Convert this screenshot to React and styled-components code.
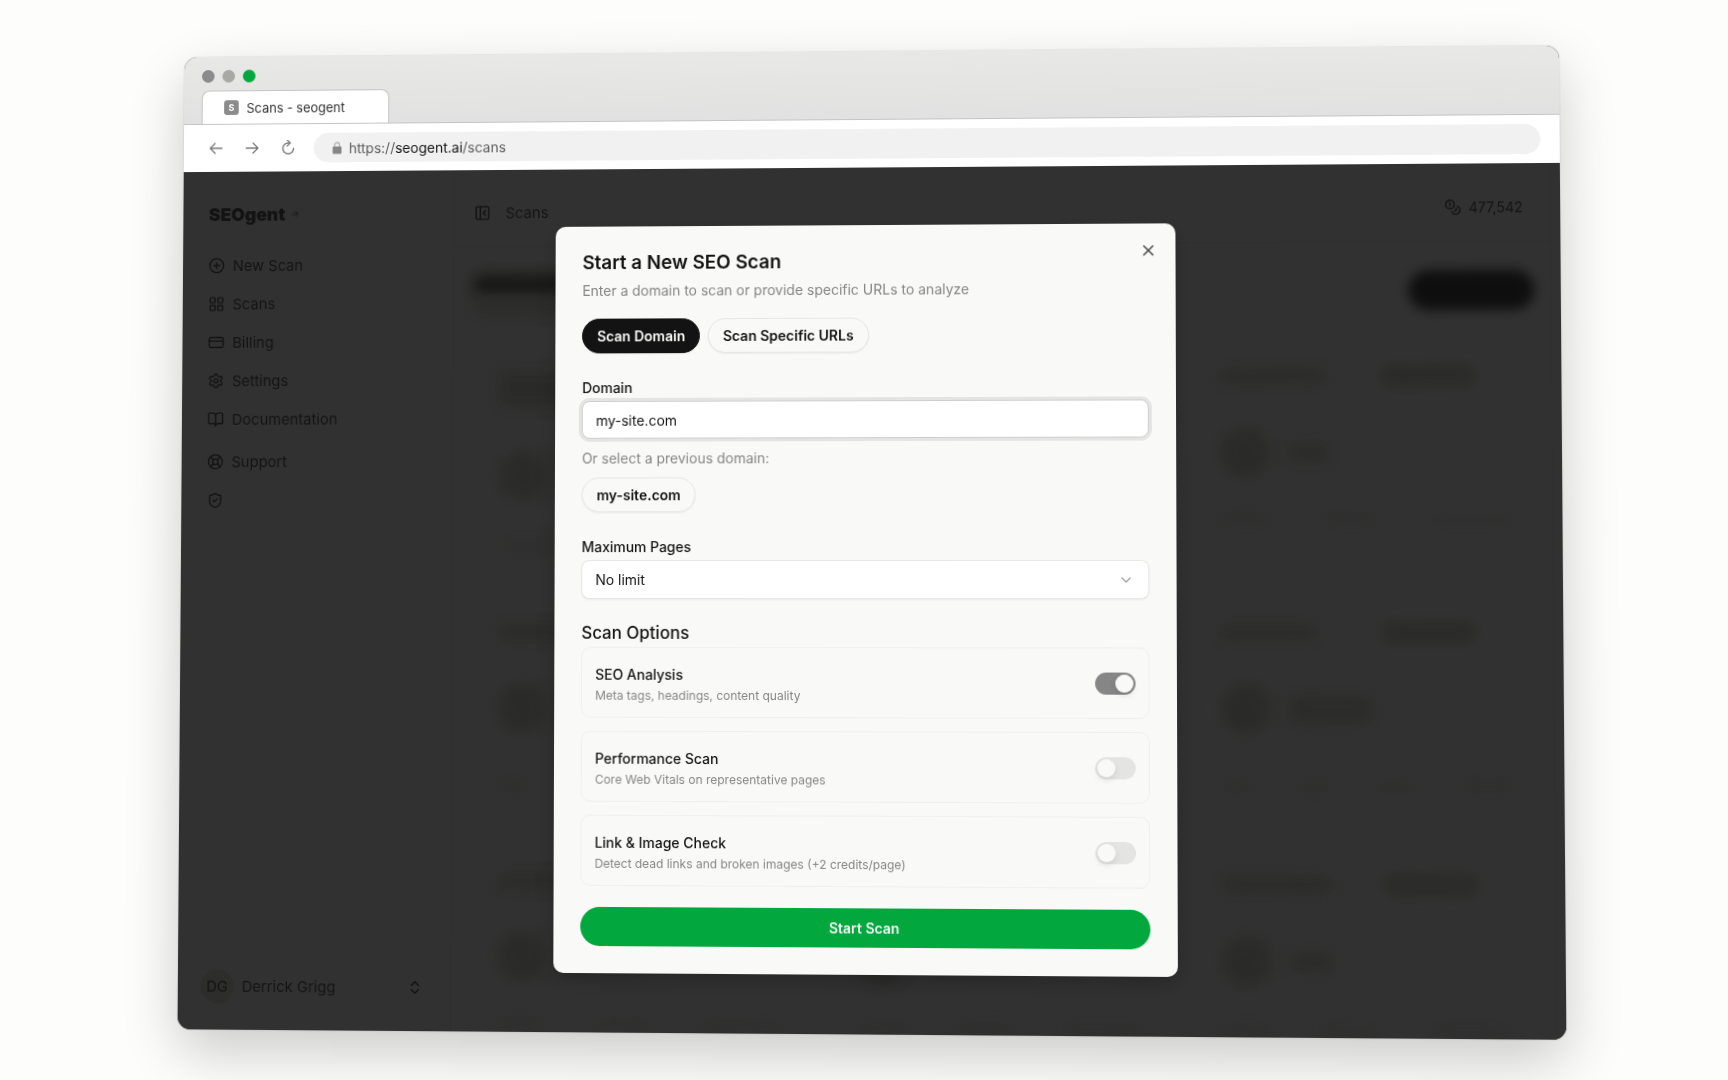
import React, { useState } from "react";
import styled, { createGlobalStyle } from "styled-components";
import {
  BookOpen,
  ChevronDown,
  ChevronsUpDown,
  CirclePlus,
  Coins,
  CreditCard,
  LayoutGrid,
  LifeBuoy,
  PanelLeftClose,
  Settings,
  ShieldCheck,
  X,
} from "lucide-react";

const navItems = [
  { label: "New Scan", icon: CirclePlus },
  { label: "Scans", icon: LayoutGrid },
  { label: "Billing", icon: CreditCard },
  { label: "Settings", icon: Settings },
  { label: "Documentation", icon: BookOpen },
];

const scanOptions = [
  {
    id: "seo",
    title: "SEO Analysis",
    text: "Meta tags, headings, content quality",
  },
  {
    id: "performance",
    title: "Performance Scan",
    text: "Core Web Vitals on representative pages",
  },
  {
    id: "links",
    title: "Link & Image Check",
    text: "Detect dead links and broken images (+2 credits/page)",
  },
];

const toolIcons = {
  Back: "M14 8H2M7 3 2 8l5 5",
  Forward: "M2 8h12M9 3l5 5-5 5",
  Reload: "M8 3a5.5 5.5 0 1 0 5.5 5.5M7 0l3 3-3 3",
};

// the list behind the dialog is only seen as blurred shapes
const scanCards = [
  { tall: true, title: 130, name: 70, stats: [60, 60, 80] },
  { title: 110, name: 80, stats: [60, 60, 80] },
  { title: 106, name: 40, stats: [50, 50, 80] },
  { title: 100, name: 80, block: true, stats: [30, 30, 30, 40] },
  { title: 110, name: 80, block: true, stats: [30, 30, 30, 40] },
  { title: 94, name: 80, block: true, stats: [30, 30, 36, 46] },
  { title: 100, name: 80, stats: [50, 60, 80] },
  { title: 110, name: 80, stats: [50, 60, 80] },
  { title: 110, name: 40, stats: [50, 60, 80] },
];

function BrowserChrome() {
  return (
    <>
      <TitleBar>
        <Lights>
          <Light $color="#8b8b8d" />
          <Light $color="#a9a9a4" />
          <Light $color="#02a83d" />
        </Lights>
        <Tab>
          <Favicon>S</Favicon>
          Scans - seogent
        </Tab>
      </TitleBar>
      <Toolbar>
        {Object.entries(toolIcons).map(([name, path]) => (
          <ToolButton aria-label={name} key={name}>
            <svg width="16" height="16" viewBox="0 0 16 16">
              <path
                d={path}
                fill="none"
                stroke="currentColor"
                strokeWidth="1.4"
                strokeLinecap="round"
                strokeLinejoin="round"
              />
            </svg>
          </ToolButton>
        ))}
        <Address>
          <svg width="10" height="13" viewBox="0 0 10 13" aria-hidden="true">
            <path
              d="M2.5 6V3.5a2.5 2.5 0 0 1 5 0V6"
              fill="none"
              stroke="#b4b4b4"
              strokeWidth="1.4"
            />
            <rect x="0.5" y="5" width="9" height="7.5" rx="1" fill="#868686" />
          </svg>
          <span>
            https://<Host>seogent.ai</Host>/scans
          </span>
        </Address>
      </Toolbar>
    </>
  );
}

function Sidebar() {
  return (
    <SidebarPanel>
      <Logo>
        SEOgent
        <svg width="7" height="7" viewBox="0 0 7 7" aria-hidden="true">
          <path
            d="M2.5 0.5 5 3 2.5 5.5M0.5 2 2 3.5 0.5 5M4.5 1 6.5 3.5 4.5 6"
            fill="none"
            stroke="#181818"
            strokeWidth="1"
          />
        </svg>
      </Logo>
      <Nav>
        {navItems.map(({ label, icon: Icon }) => (
          <NavLink href="#" key={label}>
            <Icon size={17} strokeWidth={2} />
            {label}
          </NavLink>
        ))}
      </Nav>
      <Nav>
        <NavLink href="#">
          <LifeBuoy size={17} strokeWidth={2} />
          Support
        </NavLink>
        <NavLink href="#" aria-label="Security">
          <ShieldCheck size={17} strokeWidth={2} />
        </NavLink>
      </Nav>
      <UserButton>
        <Avatar>DG</Avatar>
        <UserName>Derrick Grigg</UserName>
        <ChevronsUpDown size={17} strokeWidth={2} />
      </UserButton>
    </SidebarPanel>
  );
}

function ScanList() {
  return (
    <MainPanel>
      <MainHeader>
        <Crumb>
          <PanelLeftClose size={17} strokeWidth={2} />
          Scans
        </Crumb>
        <Credits>
          <Coins size={17} strokeWidth={2} />
          477,542
        </Credits>
      </MainHeader>
      <Blurred aria-hidden="true">
        <PageHead>
          <PageTitle>
            <Smudge $width={220} $height={20} $dark />
            <Smudge $width={260} $height={14} />
          </PageTitle>
          <ActionShape />
        </PageHead>
        <CardGrid>
          {scanCards.map((card, i) => (
            <ScanCard key={i}>
              <CardHead $tall={card.tall}>
                <Smudge $width={card.title} $height={card.tall ? 36 : 15} />
                <BadgeShape />
              </CardHead>
              <CardScore>
                <ScoreCircle />
                <Smudge $width={card.name} $height={card.block ? 26 : 18} />
              </CardScore>
              <CardStats $tall={card.block}>
                {card.stats.map((width, n) => (
                  <Smudge key={n} $width={width} $height={12} $faint />
                ))}
              </CardStats>
            </ScanCard>
          ))}
        </CardGrid>
      </Blurred>
    </MainPanel>
  );
}

function ScanDialog() {
  const [mode, setMode] = useState("domain");
  const [domain, setDomain] = useState("my-site.com");
  const [enabled, setEnabled] = useState({ seo: true });

  return (
    <Dialog role="dialog" aria-labelledby="dialog-title">
      <CloseButton aria-label="Close">
        <X size={18} strokeWidth={2} />
      </CloseButton>
      <DialogTitle id="dialog-title">Start a New SEO Scan</DialogTitle>
      <Description>
        Enter a domain to scan or provide specific URLs to analyze
      </Description>
      <Modes>
        <Pill $active={mode === "domain"} onClick={() => setMode("domain")}>
          Scan Domain
        </Pill>
        <Pill $active={mode === "urls"} onClick={() => setMode("urls")}>
          Scan Specific URLs
        </Pill>
      </Modes>
      <Field>
        <Label htmlFor="domain">Domain</Label>
        <TextInput
          id="domain"
          value={domain}
          onChange={(e) => setDomain(e.target.value)}
        />
      </Field>
      <Previous>
        <Hint>Or select a previous domain:</Hint>
        <Pill onClick={() => setDomain("my-site.com")}>my-site.com</Pill>
      </Previous>
      <Field>
        <Label htmlFor="max-pages">Maximum Pages</Label>
        <SelectBox>
          <Select id="max-pages">
            <option>No limit</option>
            <option>100</option>
            <option>500</option>
          </Select>
          <ChevronDown size={16} strokeWidth={2} />
        </SelectBox>
      </Field>
      <OptionsTitle>Scan Options</OptionsTitle>
      <Options>
        {scanOptions.map((option) => (
          <Option key={option.id}>
            <div>
              <OptionLabel htmlFor={option.id}>{option.title}</OptionLabel>
              <OptionText>{option.text}</OptionText>
            </div>
            <Toggle
              type="checkbox"
              id={option.id}
              checked={!!enabled[option.id]}
              onChange={(e) =>
                setEnabled({ ...enabled, [option.id]: e.target.checked })
              }
            />
          </Option>
        ))}
      </Options>
      <SubmitButton>Start Scan</SubmitButton>
    </Dialog>
  );
}

export default function App() {
  return (
    <Page>
      <GlobalStyle />
      <BrowserWindow>
        <BrowserChrome />
        <AppArea>
          <Sidebar />
          <ScanList />
          <Overlay>
            <ScanDialog />
          </Overlay>
        </AppArea>
      </BrowserWindow>
    </Page>
  );
}

const GlobalStyle = createGlobalStyle`
  * {
    box-sizing: border-box;
  }
  body {
    margin: 0;
    background: #fdfdfc;
    font-family: Inter, "Liberation Sans", sans-serif;
    font-size: 14px;
    color: #131313;
  }
  button, input, select {
    font: inherit;
    color: inherit;
  }
  button {
    border: none;
    background: none;
    padding: 0;
    cursor: pointer;
  }
  h1, h2, p {
    margin: 0;
  }
`;

const Page = styled.div`
  min-height: 100vh;
  display: flex;
  align-items: center;
  justify-content: center;
  overflow: hidden;
`;
const BrowserWindow = styled.div`
  width: 80%;
  height: 91vh;
  display: flex;
  flex-direction: column;
  border-radius: 13px;
  overflow: hidden;
  background: #313131;
  box-shadow: 0 22px 56px rgba(0, 0, 0, 0.2), 0 0 2px rgba(0, 0, 0, 0.2);
  transform: perspective(1800px) rotateX(1.1deg) rotateY(-1.7deg);
`;
const TitleBar = styled.div`
  height: 69px;
  flex: none;
  display: flex;
  flex-direction: column;
  justify-content: space-between;
  padding: 13px 18px 0;
  background: linear-gradient(#e8e8e6, #e1e1e1);
  border-bottom: 1px solid #c4c4c4;
`;
const Lights = styled.div`
  display: flex;
  gap: 8px;
`;
const Light = styled.span`
  width: 13px;
  height: 13px;
  border-radius: 50%;
  background: ${(props) => props.$color};
`;
const Tab = styled.div`
  width: 192px;
  height: 34px;
  display: flex;
  align-items: center;
  gap: 8px;
  padding-left: 22px;
  background: #fff;
  border: 1px solid #c4c4c4;
  border-bottom: none;
  border-radius: 8px 8px 0 0;
  font-size: 13px;
  color: #313131;
`;
const Favicon = styled.span`
  width: 15px;
  height: 15px;
  border-radius: 3px;
  background: #8b8b8b;
  color: #fff;
  font-size: 9px;
  font-weight: 700;
  line-height: 15px;
  text-align: center;
`;
const Toolbar = styled.div`
  height: 48px;
  flex: none;
  display: flex;
  align-items: center;
  padding: 0 19px 0 14px;
  background: #fff;
`;
const ToolButton = styled.button`
  width: 37px;
  height: 30px;
  display: flex;
  align-items: center;
  justify-content: center;
  color: #7a7a7a;
`;
const Address = styled.div`
  flex: 1;
  height: 30px;
  margin-left: 8px;
  padding-left: 19px;
  display: flex;
  align-items: center;
  gap: 7px;
  border-radius: 15px;
  background: #f1f1f1;
  color: #5c5c5c;
`;
const Host = styled.span`
  color: #131313;
`;

const AppArea = styled.div`
  flex: 1;
  min-height: 0;
  position: relative;
  display: grid;
  grid-template-columns: 276px 1fr;
  background: #313131;
`;
const SidebarPanel = styled.aside`
  display: flex;
  flex-direction: column;
  padding: 30px 27px 26px 26px;
`;
const Logo = styled.div`
  display: flex;
  align-items: center;
  gap: 7px;
  height: 26px;
  margin-bottom: 20px;
  font-size: 18px;
  font-weight: 900;
`;
const Nav = styled.nav`
  display: flex;
  flex-direction: column;
  margin-bottom: 4px;
`;
const NavLink = styled.a`
  height: 39px;
  display: flex;
  align-items: center;
  gap: 8px;
  color: #131313;
  font-size: 15px;
  text-decoration: none;
`;
const UserButton = styled.button`
  display: flex;
  align-items: center;
  gap: 8px;
  margin-top: auto;
  font-size: 15px;
  text-align: left;
`;
const Avatar = styled.span`
  width: 34px;
  height: 34px;
  margin-left: -3px;
  border-radius: 50%;
  background: #2d2d2b;
  line-height: 34px;
  text-align: center;
`;
const UserName = styled.span`
  flex: 1;
`;

const MainPanel = styled.main`
  min-width: 0;
  min-height: 0;
  overflow: hidden;
  margin-right: 9px;
  border: solid #2f2f2f;
  border-width: 0 1px;
`;
const MainHeader = styled.header`
  height: 78px;
  display: flex;
  align-items: center;
  justify-content: space-between;
  padding: 10px 27px 0 20px;
  border-bottom: 1px solid #2f2f2f;
  font-size: 15px;
`;
const Crumb = styled.div`
  display: flex;
  align-items: center;
  gap: 15px;
`;
const Credits = styled.div`
  display: flex;
  align-items: center;
  gap: 7px;
  font-size: 14px;
`;
const Blurred = styled.div`
  padding: 28px 16px 28px 20px;
`;
const PageHead = styled.div`
  display: flex;
  align-items: center;
  justify-content: space-between;
  margin-bottom: 28px;
`;
const PageTitle = styled.div`
  display: flex;
  flex-direction: column;
  gap: 6px;
`;
const Smudge = styled.div`
  width: ${(props) => props.$width}px;
  height: ${(props) => props.$height}px;
  border-radius: 6px;
  background: ${(props) => (props.$dark ? "#141412" : "#2a2a28")};
  opacity: ${(props) => (props.$faint ? 0.4 : 0.9)};
  filter: blur(7px);
`;
const ActionShape = styled.div`
  width: 124px;
  height: 40px;
  border-radius: 20px;
  background: #0e0e0e;
  filter: blur(6px);
`;
const CardGrid = styled.div`
  display: grid;
  grid-template-columns: repeat(3, 1fr);
  gap: 23px;
`;
const ScanCard = styled.div`
  padding: 27px 26px 23px;
`;
const CardHead = styled.div`
  height: ${(props) => (props.$tall ? 42 : 20)}px;
  display: flex;
  align-items: center;
  justify-content: space-between;
  padding-right: 32px;
`;
const BadgeShape = styled.div`
  width: 94px;
  height: 24px;
  border-radius: 12px;
  background: #2b2b29;
  filter: blur(5px);
`;
const CardScore = styled.div`
  display: flex;
  align-items: center;
  gap: 18px;
  margin: 41px 0 37px;
`;
const ScoreCircle = styled.div`
  width: 50px;
  height: 50px;
  border-radius: 50%;
  background: #2a2a28;
  filter: blur(7px);
`;
const CardStats = styled.div`
  height: ${(props) => (props.$tall ? 28 : 12)}px;
  display: flex;
  align-items: center;
  justify-content: space-between;
`;

const Overlay = styled.div`
  position: absolute;
  inset: 0;
  display: flex;
  align-items: center;
  justify-content: center;
`;
const Dialog = styled.section`
  position: relative;
  width: 45%;
  min-width: 480px;
  padding: 27px;
  border-radius: 10px;
  background: #f9f9f8;
  box-shadow: 0 8px 20px rgba(0, 0, 0, 0.2);
`;
const CloseButton = styled.button`
  position: absolute;
  top: 18px;
  right: 18px;
  width: 18px;
  height: 18px;
  color: #4a4a4a;
`;
const DialogTitle = styled.h1`
  font-size: 19px;
  line-height: 20px;
  font-weight: 600;
`;
const Description = styled.p`
  margin-top: 8px;
  line-height: 20px;
  color: #868686;
`;
const Modes = styled.div`
  display: flex;
  gap: 8px;
  margin: 18px 0 26px;
`;
const Pill = styled.button`
  height: 35px;
  padding: 0 14px;
  border-radius: 18px;
  border: 1px solid ${(props) => (props.$active ? "#131313" : "#e6e6e5")};
  background: ${(props) => (props.$active ? "#131313" : "#f9f9f8")};
  color: ${(props) => (props.$active ? "#f9f9f8" : "#131313")};
  box-shadow: 0 1px 2px rgba(0, 0, 0, 0.06);
  font-weight: 600;
`;
const Field = styled.div`
  display: flex;
  flex-direction: column;
  gap: 4px;
`;
const Label = styled.label`
  line-height: 18px;
  font-weight: 500;
`;
const TextInput = styled.input`
  width: 100%;
  height: 38px;
  padding: 0 13px;
  border: 1px solid #cfcfcf;
  border-radius: 8px;
  background: #fff;
  outline: none;
  box-shadow: 0 0 0 3px #e4e4e3;
`;
const Previous = styled.div`
  display: flex;
  flex-direction: column;
  align-items: flex-start;
  gap: 10px;
  margin: 11px 0 26px;
`;
const Hint = styled.p`
  line-height: 18px;
  color: #868686;
`;
const SelectBox = styled.div`
  display: flex;
  align-items: center;
  height: 39px;
  padding-right: 14px;
  border: 1px solid #e6e6e5;
  border-radius: 8px;
  background: #fff;
  box-shadow: 0 1px 2px rgba(0, 0, 0, 0.06);
  color: #a2a2a2;
`;
const Select = styled.select`
  flex: 1;
  height: 100%;
  padding: 0 13px;
  border: none;
  background: none;
  appearance: none;
  color: #131313;
`;
const OptionsTitle = styled.h2`
  margin: 24px 0 4px;
  font-size: 17px;
  line-height: 20px;
  font-weight: 500;
`;
const Options = styled.div`
  display: flex;
  flex-direction: column;
  gap: 13px;
`;
const Option = styled.div`
  display: flex;
  align-items: center;
  justify-content: space-between;
  height: 71px;
  padding: 0 13px;
  border: 1px solid #f0f0ef;
  border-radius: 10px;
`;
const OptionLabel = styled.label`
  display: block;
  padding-top: 4px;
  line-height: 22px;
  font-weight: 500;
`;
const OptionText = styled.p`
  font-size: 12px;
  line-height: 20px;
  color: #868686;
`;
const Toggle = styled.input`
  appearance: none;
  width: 40px;
  height: 22px;
  margin: 0;
  padding: 2px;
  display: flex;
  justify-content: ${(props) => (props.checked ? "flex-end" : "flex-start")};
  border-radius: 11px;
  background: ${(props) => (props.checked ? "#868686" : "#e4e4e3")};
  cursor: pointer;

  &::before {
    content: "";
    width: 18px;
    height: 18px;
    border-radius: 50%;
    background: #f9f9f8;
    box-shadow: 0 3px 6px rgba(0, 0, 0, 0.1);
  }
`;
const SubmitButton = styled.button`
  width: 100%;
  height: 39px;
  margin-top: 21px;
  border-radius: 20px;
  background: #02a83d;
  color: #f9f9f8;
  font-weight: 600;
`;
